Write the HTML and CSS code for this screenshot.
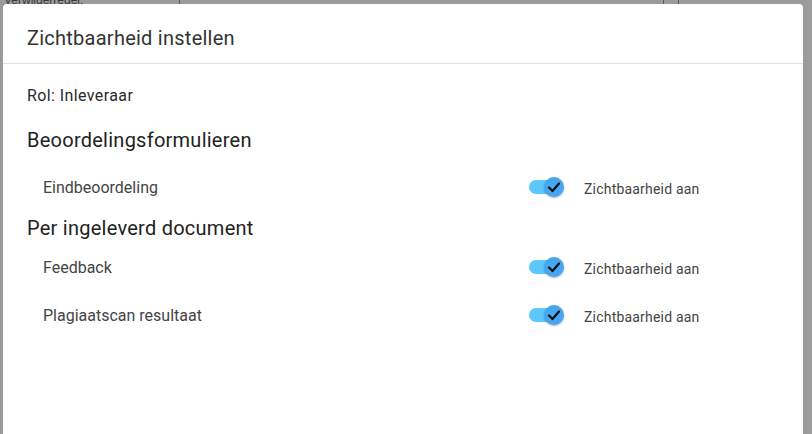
FILE: index.html
```html
<!DOCTYPE html>
<html lang="nl">
<head>
<meta charset="utf-8">
<title>Zichtbaarheid instellen</title>
<link rel="stylesheet" href="styles.css">
</head>
<body>
<div class="backdrop">
  <div class="behind">
    <span class="behind-label">Verwijderregel:</span>
    <span class="behind-cell c1"></span>
    <span class="behind-cell c2"></span>
  </div>
</div>
<div class="dialog">
  <div class="dialog-header">
    <h2 class="dialog-title">Zichtbaarheid instellen</h2>
  </div>
  <div class="dialog-body">
    <p class="role">Rol: Inleveraar</p>
    <h3 class="section-title first">Beoordelingsformulieren</h3>
    <div class="row">
      <span class="row-label">Eindbeoordeling</span>
      <span class="toggle"><span class="track"></span><span class="thumb"><svg viewBox="0 0 20 20" width="20" height="20"><path d="M5 10.5 L8.5 14 L15 6.5" fill="none" stroke="#111" stroke-width="2.2" stroke-linecap="round" stroke-linejoin="round"/></svg></span></span>
      <span class="toggle-text">Zichtbaarheid aan</span>
    </div>
    <h3 class="section-title second">Per ingeleverd document</h3>
    <div class="row">
      <span class="row-label">Feedback</span>
      <span class="toggle"><span class="track"></span><span class="thumb"><svg viewBox="0 0 20 20" width="20" height="20"><path d="M5 10.5 L8.5 14 L15 6.5" fill="none" stroke="#111" stroke-width="2.2" stroke-linecap="round" stroke-linejoin="round"/></svg></span></span>
      <span class="toggle-text">Zichtbaarheid aan</span>
    </div>
    <div class="row">
      <span class="row-label">Plagiaatscan resultaat</span>
      <span class="toggle"><span class="track"></span><span class="thumb"><svg viewBox="0 0 20 20" width="20" height="20"><path d="M5 10.5 L8.5 14 L15 6.5" fill="none" stroke="#111" stroke-width="2.2" stroke-linecap="round" stroke-linejoin="round"/></svg></span></span>
      <span class="toggle-text">Zichtbaarheid aan</span>
    </div>
  </div>
</div>
</body>
</html>
```
FILE: styles.css
```css
html, body {
  margin: 0;
  padding: 0;
  height: 100%;
  overflow: hidden;
}
body {
  background: #9b9b9b;
  font-family: Roboto, "Liberation Sans", sans-serif;
  position: relative;
}
.backdrop {
  height: 100%;
}
.behind {
  display: flex;
  height: 12px;
  position: relative;
}
.behind-label {
  font-family: "Liberation Sans", Arial, sans-serif;
  font-size: 12px;
  color: #3a3a3a;
  margin-left: 4px;
  line-height: 12px;
  margin-top: -6px;
}
.behind-cell {
  position: absolute;
  top: 0;
  height: 6px;
  border-left: 1px solid #5e5e5e;
}
.behind-cell.c1 { left: 179px; }
.behind-cell.c2 { left: 663px; width: 14px; border-right: 1px solid #5e5e5e; }

.dialog {
  position: absolute;
  left: 3px;
  top: 4px;
  width: 800px;
  bottom: -10px;
  background: #fff;
  border-radius: 4px;
}
.dialog-header {
  padding: 18px 24px 9px;
  border-bottom: 1px solid #e2e2e2;
}
.dialog-title {
  margin: 0;
  font-size: 20px;
  line-height: 32px;
  font-weight: 400;
  letter-spacing: 0.25px;
  color: #333;
}
.dialog-body {
  padding: 22px 24px 0;
}
.role {
  margin: 0;
  font-size: 16px;
  line-height: 20px;
  letter-spacing: 0.4px;
  color: #2a2a2a;
}
.section-title {
  margin: 0;
  font-size: 20px;
  line-height: 28px;
  font-weight: 400;
  letter-spacing: 0.25px;
  color: #222;
}
.section-title.first {
  margin-top: 20px;
  margin-bottom: 9px;
}
.section-title.second {
  margin-top: 3px;
  margin-bottom: 1px;
}
.row {
  display: grid;
  grid-template-columns: 486px 35px auto;
  align-items: center;
  height: 48px;
  padding-left: 16px;
}
.row-label {
  font-size: 16px;
  color: #444;
}
.toggle {
  position: relative;
  display: block;
  width: 35px;
  height: 20px;
}
.track {
  position: absolute;
  left: 0;
  top: 3px;
  width: 34px;
  height: 14px;
  border-radius: 7px;
  background: #5cc8fb;
}
.thumb {
  position: absolute;
  left: 15px;
  top: 0;
  width: 20px;
  height: 20px;
  border-radius: 50%;
  background: #45a7f2;
  box-shadow: 0 1px 2px rgba(0, 0, 0, 0.3);
}
.thumb svg {
  display: block;
}
.toggle-text {
  margin-left: 20px;
  font-size: 14px;
  letter-spacing: 0.2px;
  color: #444;
  padding-top: 3px;
}
```
